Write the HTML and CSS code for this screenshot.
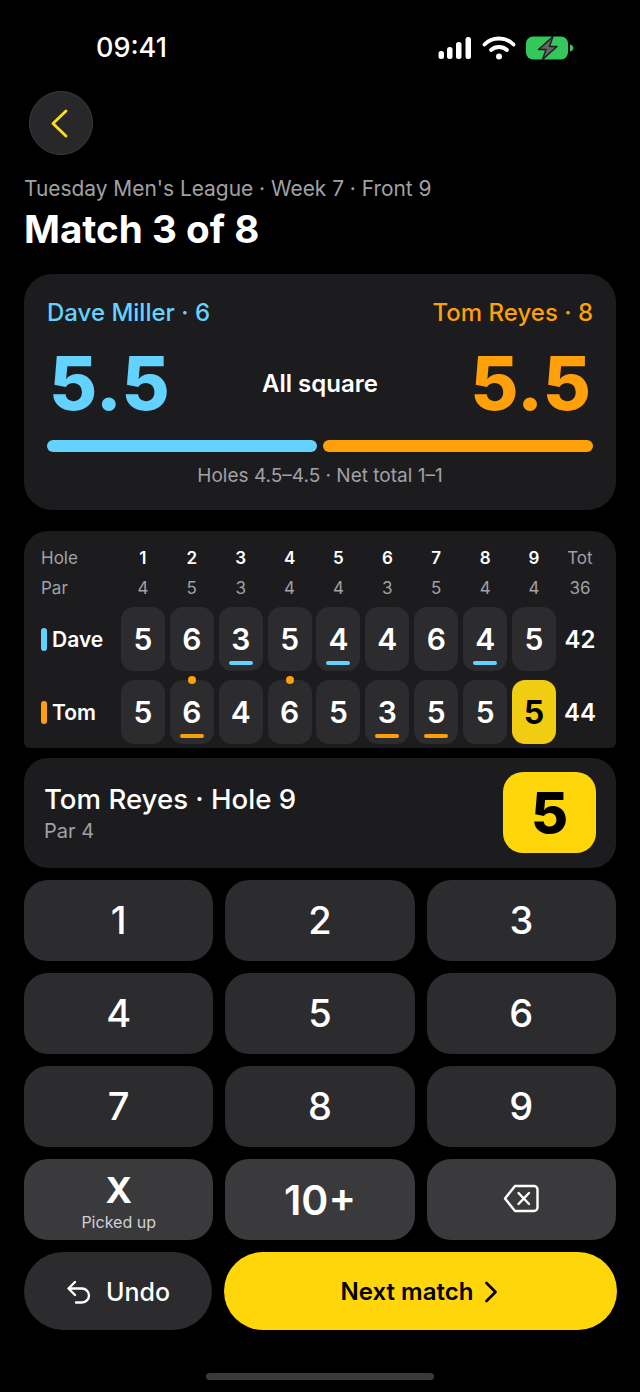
FILE: index.html
```html
<!DOCTYPE html>
<html lang="en">
<head>
<meta charset="UTF-8" />
<meta name="viewport" content="width=device-width, initial-scale=1" />
<title>Match 3 of 8</title>
<link rel="stylesheet" href="styles.css">
</head>
<body>

<div class="status-bar">
  <span class="time">09:41</span>
  <div class="status-icons">
    <svg width="34" height="22" viewBox="0 0 34 22" fill="#fff">
      <rect x="0.5" y="14" width="5.5" height="8" rx="2.5" />
      <rect x="9" y="10" width="5.5" height="12" rx="2.5" />
      <rect x="18" y="5" width="5.5" height="17" rx="2.5" />
      <rect x="27.5" y="0" width="5.5" height="22" rx="2.5" />
    </svg>
    <svg width="34" height="24" viewBox="0 0 34 24" fill="none" stroke="#fff" stroke-width="3.8" stroke-linecap="round">
      <path d="M2.5 8.5C10 0.5 24 0.5 31.5 8.5" />
      <path d="M9 14C13.5 10 20.5 10 25 14" />
      <circle cx="17" cy="20.5" r="3" fill="#fff" stroke="none" />
    </svg>
    <svg width="48" height="24" viewBox="0 0 48 24">
      <rect x="0" y="0.5" width="42" height="23" rx="7" fill="#34c759" />
      <path d="M44 8.5c2.4.6 3.4 2 3.4 3.5s-1 2.9-3.4 3.5z" fill="#34c759" />
      <path d="M27 0.5L12.5 13.5h7.5l-3.5 10L31 10.5h-7.5z" fill="#636366" stroke="#1c1c1e" stroke-width="1.4" stroke-linejoin="round" />
    </svg>
  </div>
</div>

<div class="page">
  <button class="back-btn">
    <svg width="18" height="29" viewBox="0 0 18 29" fill="none" stroke="#ffe01a" stroke-width="2.8" stroke-linecap="round" stroke-linejoin="round">
      <path d="M16 2L3 14.5L16 27" />
    </svg>
  </button>

  <p class="league">Tuesday Men's League · Week 7 · Front 9</p>
  <h1 class="title">Match 3 of 8</h1>

  <section class="summary">
    <div class="names">
      <span class="dave">Dave Miller · 6</span>
      <span class="tom">Tom Reyes · 8</span>
    </div>
    <div class="scores">
      <span class="big dave">5.5</span>
      <span class="state">All square</span>
      <span class="big tom">5.5</span>
    </div>
    <div class="bars">
      <div class="bar bar-dave"></div>
      <div class="bar bar-tom"></div>
    </div>
    <p class="detail">Holes 4.5–4.5 · Net total 1–1</p>
  </section>

  <section class="scorecard">
    <div class="row row-holes">
      <span class="row-label">Hole</span>
      <span>1</span><span>2</span><span>3</span><span>4</span><span>5</span><span>6</span><span>7</span><span>8</span><span>9</span>
      <span class="total-head">Tot</span>
    </div>
    <div class="row row-par">
      <span class="row-label">Par</span>
      <span>4</span><span>5</span><span>3</span><span>4</span><span>4</span><span>3</span><span>5</span><span>4</span><span>4</span>
      <span>36</span>
    </div>
    <div class="row row-player">
      <span class="player"><i class="tick tick-dave"></i>Dave</span>
      <span class="cell">5</span>
      <span class="cell">6</span>
      <span class="cell"><b>3</b><i class="mark mark-dave"></i></span>
      <span class="cell">5</span>
      <span class="cell"><b>4</b><i class="mark mark-dave"></i></span>
      <span class="cell">4</span>
      <span class="cell">6</span>
      <span class="cell"><b>4</b><i class="mark mark-dave"></i></span>
      <span class="cell">5</span>
      <span class="total">42</span>
    </div>
    <div class="row row-player">
      <span class="player"><i class="tick tick-tom"></i>Tom</span>
      <span class="cell">5</span>
      <span class="cell"><i class="dot"></i><b>6</b><i class="mark mark-tom"></i></span>
      <span class="cell">4</span>
      <span class="cell"><i class="dot"></i>6</span>
      <span class="cell">5</span>
      <span class="cell"><b>3</b><i class="mark mark-tom"></i></span>
      <span class="cell"><b>5</b><i class="mark mark-tom"></i></span>
      <span class="cell">5</span>
      <span class="cell cell-active">5</span>
      <span class="total">44</span>
    </div>
  </section>

  <section class="entry">
    <div>
      <div class="entry-title">Tom Reyes · Hole 9</div>
      <div class="entry-par">Par 4</div>
    </div>
    <div class="entry-value">5</div>
  </section>

  <div class="keypad">
    <button class="key">1</button>
    <button class="key">2</button>
    <button class="key">3</button>
    <button class="key">4</button>
    <button class="key">5</button>
    <button class="key">6</button>
    <button class="key">7</button>
    <button class="key">8</button>
    <button class="key">9</button>
    <button class="key key-alt key-pickup"><span class="x">X</span><span class="x-label">Picked up</span></button>
    <button class="key key-alt key-ten">10+</button>
    <button class="key key-alt">
      <svg class="del-icon" width="36" height="29" viewBox="0 0 36 29" fill="none" stroke="#fff" stroke-width="2.4" stroke-linecap="round" stroke-linejoin="round">
        <path d="M12 2H31a3.5 3.5 0 0 1 3.5 3.5v18a3.5 3.5 0 0 1-3.5 3.5H12L2 14.5z" />
        <path d="M15.5 9l10.5 11M26 9L15.5 20" />
      </svg>
    </button>
  </div>

  <div class="actions">
    <button class="undo-btn">
      <svg width="26" height="26" viewBox="0 0 26 26" fill="none" stroke="#fff" stroke-width="2.4" stroke-linecap="round" stroke-linejoin="round">
        <path d="M9 3L2.5 9.5L9 16" />
        <path d="M3 9.5H16a7 7 0 0 1 0 14H10" />
      </svg>
      Undo
    </button>
    <button class="next-btn">
      Next match
      <svg width="14" height="22" viewBox="0 0 14 22" fill="none" stroke="#000" stroke-width="2.8" stroke-linecap="round" stroke-linejoin="round">
        <path d="M2.5 2L11.5 11L2.5 20" />
      </svg>
    </button>
  </div>
</div>

<div class="home-bar"></div>

</body>
</html>
```

FILE: styles.css
```css
* {
  box-sizing: border-box;
}

body {
  width: 640px;
  height: 1392px;
  margin: 0;
  overflow: hidden;
  background-color: #000;
  color: #fff;
  font-family: Inter, 'Noto Sans', sans-serif;
}

button {
  border: none;
  font-family: inherit;
  color: #fff;
  padding: 0;
}

.status-bar {
  height: 91px;
  display: flex;
  justify-content: space-between;
  align-items: flex-start;
  padding: 32px 66px 0 96px;
}

.time {
  font-size: 27px;
  font-weight: 500;
  line-height: 32px;
}

.status-icons {
  display: flex;
  align-items: center;
  gap: 10px;
  padding-top: 4px;
}

.page {
  padding: 0 24px;
}

.back-btn {
  display: flex;
  align-items: center;
  justify-content: center;
  width: 64px;
  height: 64px;
  margin-left: 5px;
  padding-right: 5px;
  background: #28282a;
  border: 1px solid #3a3a3c;
  border-radius: 50%;
}

.league {
  margin: 21px 0 0;
  font-size: 20.9px;
  line-height: 26px;
  color: #a1a1a6;
}

.title {
  margin: 4px 0 0;
  font-size: 38.6px;
  line-height: 46px;
  font-weight: 700;
}

.summary {
  height: 236px;
  margin-top: 22px;
  padding: 23px 23px 0;
  background-color: #1c1c1e;
  border-radius: 28px;
}

.names {
  display: flex;
  justify-content: space-between;
  font-size: 24px;
  line-height: 32px;
  font-weight: 500;
}

.dave {
  color: #64d2ff;
}

.tom {
  color: #ff9f0a;
}

.scores {
  display: flex;
  justify-content: space-between;
  align-items: center;
  height: 88px;
  margin-top: 10px;
  padding: 0 2px;
}

.big {
  font-size: 74px;
  font-weight: 800;
}

.state {
  font-size: 24px;
  font-weight: 600;
}

.bars {
  display: flex;
  gap: 6px;
  margin-top: 13px;
}

.bar {
  flex: 1;
  height: 12px;
  border-radius: 6px;
}

.bar-dave {
  background-color: #64d2ff;
}

.bar-tom {
  background-color: #ff9f0a;
}

.detail {
  margin: 13px 0 0;
  text-align: center;
  font-size: 19px;
  line-height: 22px;
  color: #a1a1a6;
}

.scorecard {
  height: 217px;
  margin-top: 21px;
  padding: 12px 16px 0 17px;
  background-color: #1c1c1e;
  border-radius: 24px 24px 6px 6px;
  overflow: hidden;
}

.row {
  display: grid;
  grid-template-columns: 75px repeat(9, 44px) 38px;
  column-gap: 4.9px;
  align-items: center;
  justify-items: center;
}

.row-holes {
  height: 30px;
  font-size: 17px;
  font-weight: 600;
}

.row-par {
  height: 30px;
  font-size: 17px;
  color: #a1a1a6;
}

.row-label,
.total-head {
  font-weight: 400;
  color: #a1a1a6;
}

.row-label {
  justify-self: start;
}

.row-player {
  margin-top: 4px;
  height: 64px;
  margin-bottom: 9px;
}

.player {
  display: flex;
  align-items: center;
  justify-self: start;
  gap: 5px;
  font-size: 21px;
  font-weight: 600;
}

.tick {
  width: 6px;
  height: 23px;
  border-radius: 3px;
}

.tick-dave {
  background-color: #64d2ff;
}

.tick-tom {
  background-color: #ff9f0a;
}

.cell {
  position: relative;
  display: flex;
  align-items: center;
  justify-content: center;
  width: 44px;
  height: 64px;
  background-color: #2c2c2e;
  border-radius: 13px;
  font-size: 30px;
  font-weight: 600;
}

.cell b {
  font-weight: 600;
}

.cell-active {
  background-color: #f0cc12;
  color: #000;
  font-size: 32px;
  font-weight: 700;
}

.mark {
  position: absolute;
  left: 10px;
  bottom: 6px;
  width: 24px;
  height: 4px;
  border-radius: 2px;
}

.mark-dave {
  background-color: #64d2ff;
}

.mark-tom {
  background-color: #ff9f0a;
}

.dot {
  position: absolute;
  top: -4px;
  left: 18px;
  width: 8px;
  height: 8px;
  border-radius: 50%;
  background-color: #ff9f0a;
}

.total {
  font-size: 24px;
  font-weight: 600;
}

.entry {
  display: flex;
  justify-content: space-between;
  align-items: center;
  height: 110px;
  margin-top: 10px;
  padding: 0 20px 2px 20px;
  background-color: #1c1c1e;
  border-radius: 24px;
}

.entry-title {
  font-size: 27.6px;
  line-height: 34px;
  font-weight: 500;
}

.entry-par {
  margin-top: 3px;
  font-size: 20px;
  line-height: 24px;
  color: #a1a1a6;
}

.entry-value {
  display: flex;
  align-items: center;
  justify-content: center;
  width: 93px;
  height: 81px;
  background-color: #ffd60a;
  border-radius: 20px;
  color: #000;
  font-size: 57px;
  font-weight: 800;
}

.keypad {
  display: grid;
  grid-template-columns: repeat(3, 1fr);
  grid-auto-rows: 81px;
  gap: 12px;
  margin-top: 12px;
}

.key {
  display: flex;
  flex-direction: column;
  align-items: center;
  justify-content: center;
  padding-bottom: 2px;
  background-color: #2c2c2e;
  border-radius: 24px;
  font-size: 38px;
  font-weight: 500;
}

.key-alt {
  background-color: #3a3a3c;
}

.key-pickup {
  padding: 4px 0 0;
}

.key-ten {
  padding-bottom: 0;
  font-size: 41px;
  font-weight: 600;
}

.x {
  font-size: 36px;
  line-height: 36px;
  font-weight: 700;
}

.x-label {
  margin-top: 4px;
  font-size: 16px;
  line-height: 20px;
  font-weight: 400;
  color: #d1d1d6;
}

.actions {
  display: grid;
  grid-template-columns: 188px 393px;
  column-gap: 12px;
  margin-top: 12px;
}

.undo-btn,
.next-btn {
  display: flex;
  align-items: center;
  justify-content: center;
  height: 78px;
  padding-top: 1px;
  border-radius: 39px;
  font-size: 25px;
  font-weight: 500;
}

.undo-btn {
  gap: 14px;
  background-color: #2c2c2e;
}

.next-btn {
  gap: 11px;
  padding-right: 2px;
  background-color: #ffd60a;
  color: #000;
  font-size: 24px;
  font-weight: 600;
}

.home-bar {
  width: 228px;
  height: 7px;
  margin: 43px auto 0;
  border-radius: 4px;
  background-color: #3a3a3c;
}
```
